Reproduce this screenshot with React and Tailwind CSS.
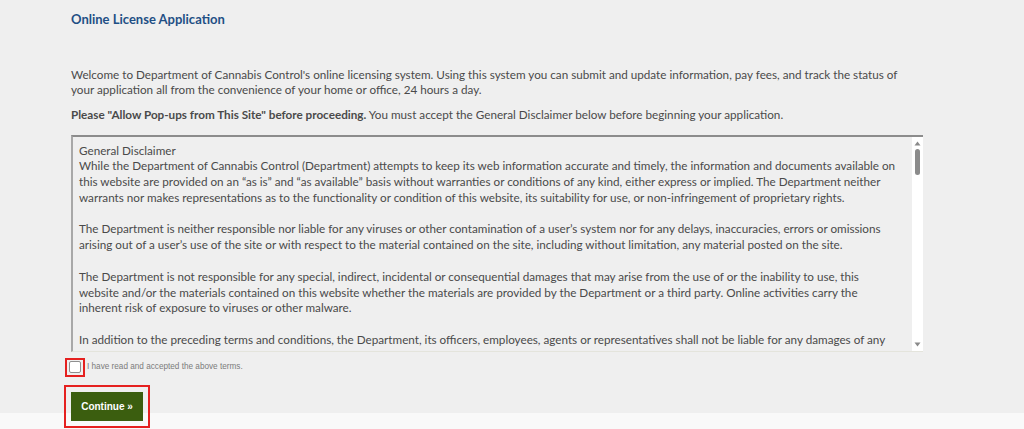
import { useState } from 'react'

const paragraphs = [
  'While the Department of Cannabis Control (Department) attempts to keep its web information accurate and timely, the information and documents available on this website are provided on an “as is” and “as available” basis without warranties or conditions of any kind, either express or implied. The Department neither warrants nor makes representations as to the functionality or condition of this website, its suitability for use, or non-infringement of proprietary rights.',
  'The Department is neither responsible nor liable for any viruses or other contamination of a user’s system nor for any delays, inaccuracies, errors or omissions arising out of a user’s use of the site or with respect to the material contained on the site, including without limitation, any material posted on the site.',
  'The Department is not responsible for any special, indirect, incidental or consequential damages that may arise from the use of or the inability to use, this website and/or the materials contained on this website whether the materials are provided by the Department or a third party. Online activities carry the inherent risk of exposure to viruses or other malware.',
  'In addition to the preceding terms and conditions, the Department, its officers, employees, agents or representatives shall not be liable for any damages of any kind, including without limitation, direct, indirect, special, incidental or consequential damages arising out of the use of this website.',
]

function FakeScrollbar() {
  return (
    <div className="w-[11px] shrink-0 bg-white flex flex-col items-center py-[3px]">
      <svg width="7" height="5" viewBox="0 0 7 5" className="mt-[1px]">
        <path d="M3.5 0.5 L6.5 4.5 L0.5 4.5 Z" fill="#8a8a8a" />
      </svg>
      <div className="w-[5px] h-[26px] rounded-full bg-[#8b8b8b] mt-[3px]" />
      <div className="flex-1" />
      <svg width="7" height="5" viewBox="0 0 7 5" className="mb-[1px]">
        <path d="M0.5 0.5 L6.5 0.5 L3.5 4.5 Z" fill="#8a8a8a" />
      </svg>
    </div>
  )
}

export default function App() {
  const [accepted, setAccepted] = useState(false)

  return (
    <div
      className="min-h-screen bg-[linear-gradient(to_bottom,#efefef_413px,#f9f9f9_413px)] text-[#4a4a4a]"
      style={{ fontFamily: 'Lato, "Open Sans", sans-serif' }}
    >
      <div className="pl-[71px] w-[923px] pt-[11px]">
        <h1 className="text-[13px] leading-[16px] font-bold text-[#1f4f85]">Online License Application</h1>

        <p className="mt-[40px] max-w-[835px] text-[11.7px] leading-[14.5px]">
          Welcome to Department of Cannabis Control's online licensing system. Using this system you can submit and update information, pay fees, and track the status of your application all from the convenience of your home or office, 24 hours a day.
        </p>

        <p className="mt-[11px] text-[11.7px] leading-[14.5px]">
          <span className="font-bold">Please "Allow Pop-ups from This Site" before proceeding.</span> You must accept the General Disclaimer below before beginning your application.
        </p>

        <div className="mt-[13px] h-[217px] flex border-t-2 border-l-2 border-b border-t-[#8c8c8c] border-l-[#a8a8a8] border-b-[#e4e4dc]">
          <div className="flex-1 overflow-hidden pl-[6px] pr-[13px] pt-[6px] text-[11.7px] leading-[15.8px]">
            <p>General Disclaimer</p>
            {paragraphs.map((p, i) => (
              <p key={i} className={i > 0 ? 'mt-[15.8px]' : ''}>{p}</p>
            ))}
          </div>
          <FakeScrollbar />
        </div>

        <div className="mt-[6px] flex items-center">
          <label className="ml-[-6px] w-[20px] h-[19px] border-2 border-[#e5201f] flex items-center justify-center">
            <input
              type="checkbox"
              checked={accepted}
              onChange={(e) => setAccepted(e.target.checked)}
              className="appearance-none w-[12px] h-[12px] rounded-[2px] border border-[#8f8f8f] bg-white checked:bg-[#3b5e0f]"
            />
          </label>
          <span
            className="ml-[2px] text-[8.2px] text-[#7c7c7c]"
            style={{ fontFamily: '"Liberation Sans", Arial, sans-serif' }}
          >
            I have read and accepted the above terms.
          </span>
        </div>

        <button
          className="mt-[15px] w-[72px] h-[29px] bg-[#3b5e0f] text-white text-[10px] font-bold outline-2 outline-[#e5201f] outline-offset-[5px]"
          style={{ fontFamily: '"Liberation Sans", Arial, sans-serif' }}
        >
          Continue »
        </button>
      </div>
    </div>
  )
}
